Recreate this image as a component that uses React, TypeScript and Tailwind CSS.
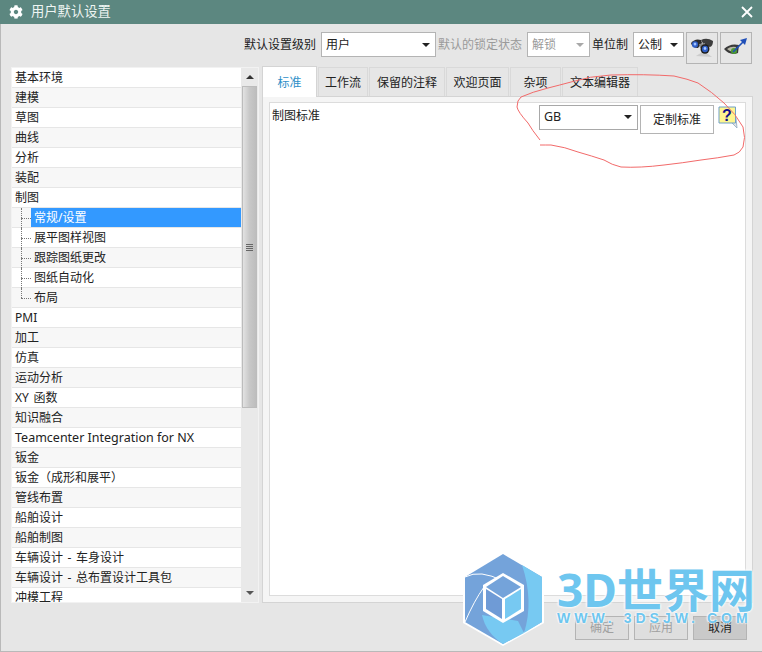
import { FaCog } from 'react-icons/fa';

const cjk = "font-['Noto_Sans','Noto_Sans_CJK_SC',sans-serif]";

const topRows = ['基本环境', '建模', '草图', '曲线', '分析', '装配', '制图'];
const childRows = ['常规/设置', '展平图样视图', '跟踪图纸更改', '图纸自动化', '布局'];
const bottomRows = [
  'PMI', '加工', '仿真', '运动分析', 'XY 函数', '知识融合', 'Teamcenter Integration for NX', '钣金',
  '钣金（成形和展平）', '管线布置', '船舶设计', '船舶制图', '车辆设计 - 车身设计', '车辆设计 - 总布置设计工具包', '冲模工程',
];
const tabs = [
  { label: '标准', w: 'w-[55px]' },
  { label: '工作流', w: 'w-[50px]' },
  { label: '保留的注释', w: 'w-[76px]' },
  { label: '欢迎页面', w: 'w-[63px]' },
  { label: '杂项', w: 'w-[51px]' },
  { label: '文本编辑器', w: 'w-[76px]' },
];

function Arrow({ muted }: { muted?: boolean }) {
  return (
    <span className={`w-0 h-0 border-x-[4px] border-x-transparent border-t-[4px] ${muted ? 'border-t-[#a8a8a8]' : 'border-t-[#222]'}`}></span>
  );
}

function Select({ value, width, muted }: { value: string; width: string; muted?: boolean }) {
  return (
    <div className={`${width} h-[25px] bg-white border border-[#b4b4b4] flex items-center justify-between pl-[4px] pr-[5px] text-[12px] ${muted ? 'text-[#9a9a9a]' : 'text-[#222]'}`}>
      <span>{value}</span>
      <Arrow muted={muted} />
    </div>
  );
}

function Row({ label, index, child, selected, last }: { label: string; index: number; child?: boolean; selected?: boolean; last?: boolean }) {
  const bg = index % 2 === 0 ? 'bg-white' : 'bg-[#f7f7f7]';
  const size = label.startsWith('Teamcenter') ? 'text-[12.5px] [word-spacing:0px]' : 'text-[12px] [word-spacing:1.5px]';
  return (
    <div className={`h-5 shrink-0 flex border-b border-[#e6e6e6] ${size} text-[#222] leading-[19px] whitespace-nowrap ${bg}`}>
      {child && (
        <span className="relative w-[19px] shrink-0">
          <span className={`absolute left-[9px] top-0 border-l border-dotted border-[#777] ${last ? 'h-[10px]' : 'h-5'}`}></span>
          <span className="absolute left-[9px] top-[10px] w-[10px] border-t border-dotted border-[#777]"></span>
        </span>
      )}
      <span className={selected ? 'flex-1 bg-[#3399ff] text-white pl-[3px]' : 'pl-[3px]'}>{label}</span>
    </div>
  );
}

function Tree() {
  return (
    <div className="w-[248px] h-[536px] shrink-0 bg-white border border-[#f2f2f2] flex">
      <div className="w-[229px] overflow-hidden flex flex-col">
        {topRows.map((r, i) => <Row key={r} label={r} index={i} />)}
        {childRows.map((r, i) => (
          <Row key={r} label={r} index={i + 7} child selected={i === 0} last={i === 4} />
        ))}
        {bottomRows.map((r, i) => <Row key={r} label={r} index={i + 12} />)}
      </div>
      <div className="flex-1 bg-[#e9e9e9] flex flex-col items-center">
        <div className="h-[18px] flex items-center">
          <span className="w-0 h-0 border-x-[4px] border-x-transparent border-b-[4px] border-b-[#333]"></span>
        </div>
        <div className="w-[15px] h-[322px] bg-gradient-to-r from-[#e2e2e2] via-[#c8c8c8] to-[#bdbdbd] border border-[#bcbcbc] flex flex-col items-center justify-center gap-px">
          <span className="w-[7px] h-px bg-[#666]"></span>
          <span className="w-[7px] h-px bg-[#666]"></span>
          <span className="w-[7px] h-px bg-[#666]"></span>
          <span className="w-[7px] h-px bg-[#666]"></span>
        </div>
        <div className="mt-auto h-[18px] flex items-center">
          <span className="w-0 h-0 border-x-[4px] border-x-transparent border-t-[4px] border-t-[#555]"></span>
        </div>
      </div>
    </div>
  );
}

function Binoculars() {
  return (
    <svg width="24" height="22" viewBox="0 0 24 22">
      <path d="M6 19 L22 20 L14 14 Z" fill="#bbb" opacity="0.6" />
      <path d="M1 6 Q5 1 11 3 L12 6 L8 11 Q2 11 1 6 Z" fill="#2a2a2a" />
      <path d="M11 3 Q17 0 23 4 Q23 9 20 10 L14 8 Z" fill="#3d3d3d" />
      <path d="M9 7 L15 6 L15 10 L10 11 Z" fill="#888" />
      <ellipse cx="5" cy="7.5" rx="3" ry="3.2" fill="#2f5fc8" />
      <ellipse cx="5" cy="7" rx="1.4" ry="1.5" fill="#9cc0ff" />
      <ellipse cx="15" cy="12" rx="4.5" ry="4.8" fill="#1f1f1f" />
      <ellipse cx="15" cy="12" rx="3" ry="3.2" fill="#2f5fc8" />
      <ellipse cx="15" cy="11.5" rx="1.3" ry="1.4" fill="#a8c8ff" />
    </svg>
  );
}

function EyeArrow() {
  return (
    <svg width="26" height="22" viewBox="0 0 26 22">
      <path d="M1 12 Q7 6 16 8 L15 16 Q7 19 1 12 Z" fill="#3a3a3a" />
      <path d="M4 12 Q8 9 13 10 L12 15 Q7 15 4 12 Z" fill="#b8b8a8" />
      <circle cx="11" cy="14" r="3" fill="#4c9a34" />
      <path d="M10 15 L20 5" stroke="#1f4fb8" strokeWidth="1.6" />
      <path d="M17 3 L24 1 L22 8 Z" fill="#1f4fb8" />
    </svg>
  );
}

function HelpIcon() {
  return (
    <svg width="20" height="23" viewBox="0 0 20 23" className="shrink-0">
      <path d="M13 16 L19 22 L18 12" fill="#e4e4e4" stroke="#8fa8c0" strokeWidth="0.8" />
      <path d="M1 1 H17.5 V17 H1 Z" fill="#fff68f" stroke="#6f9fc8" strokeWidth="1" />
      <text x="9" y="15" textAnchor="middle" fontFamily="'Liberation Sans', sans-serif" fontWeight="700" fontSize="16" fill="#12128c">?</text>
    </svg>
  );
}

function Watermark() {
  return (
    <div className="absolute left-[462px] top-[551px] flex items-start pointer-events-none">
      <svg width="84" height="96" viewBox="0 0 84 96" className="shrink-0">
        <polygon points="41,1 82,25 82,72 41,95 1,72 1,25" fill="#fff" />
        <polygon points="41,3 80,26 80,71 41,93 3,71 3,26" fill="#74a3da" />
        <path d="M60,14 L80,26 L80,71 L62,82 Q72,50 60,14 Z" fill="#77c9f2" />
        <path d="M20,64 Q24,82 41,93 L62,82 L56,70 Z" fill="#77c9f2" />
        <path d="M3,26 Q18,18 41,30" stroke="#fff" strokeWidth="1" fill="none" />
        <path d="M3,71 Q12,50 22,36" stroke="#fff" strokeWidth="1" fill="none" />
        <polygon points="41,22 62,34 62,60 41,72 21,60 21,34" fill="#fff" />
        <polygon points="41,25 59,36 41,47 24,36" fill="#74a3da" />
        <polygon points="24,38 40,48 40,68 24,58" fill="#6f9bd6" />
        <polygon points="43,48 59,38 59,58 43,68" fill="#77c9f2" />
      </svg>
      <div className={`ml-[11px] flex flex-col items-start ${cjk}`}>
        <span className="text-[46px] leading-[52px] mt-[12px] font-bold text-[#6ec6ef] whitespace-nowrap [text-shadow:0_0_3px_#fff,0_0_3px_#fff,0_0_2px_#fff]">3D世界网</span>
        <span className="-mt-[4px] text-[14px] leading-[15px] font-bold tracking-[4px] text-[#6ec6ef] whitespace-nowrap font-['Liberation_Sans',sans-serif] [text-shadow:0_0_2px_#fff,0_0_2px_#fff,0_0_2px_#fff]">WWW. 3DSJW. COM</span>
      </div>
    </div>
  );
}

export default function App() {
  return (
    <div className={`relative w-[762px] h-[652px] overflow-hidden flex flex-col bg-[#e6e6e6] ${cjk}`}>
      {/* title bar */}
      <div className="h-6 shrink-0 bg-[#5c8780] flex items-center pl-[9px] pr-[9px] text-white">
        <FaCog className="w-[14px] h-[14px]" />
        <span className="ml-[8px] text-[13.3px] text-[#eef5f3]">用户默认设置</span>
        <svg width="12" height="12" viewBox="0 0 12 12" className="ml-auto">
          <path d="M1 1 L11 11 M11 1 L1 11" stroke="#fff" strokeWidth="1.8" />
        </svg>
      </div>

      <div className="flex-1 flex flex-col border-l border-b border-[#b9b9b9]">
        {/* toolbar */}
        <div className="h-[43px] shrink-0 pt-2 pr-[10px] flex items-start justify-end text-[12px] text-[#222]">
          <span className="leading-[25px]">默认设置级别</span>
          <div className="ml-[5px]"><Select value="用户" width="w-[115px]" /></div>
          <span className="ml-[2px] leading-[25px] text-[#9a9a9a]">默认的锁定状态</span>
          <div className="ml-[5px]"><Select value="解锁" width="w-[63px]" muted /></div>
          <span className="ml-[2px] leading-[25px]">单位制</span>
          <div className="ml-[5px]"><Select value="公制" width="w-[51px]" /></div>
          <button className="ml-[2px] w-[32px] h-[32px] border border-[#b4b4b4] flex items-center justify-center"><Binoculars /></button>
          <button className="ml-[2px] w-[32px] h-[32px] border border-[#b4b4b4] flex items-center justify-center"><EyeArrow /></button>
        </div>

        {/* tree + tabs */}
        <div className="flex pl-[10px] gap-[3px]">
          <Tree />
          <div className="flex-1 flex flex-col pr-[9px] h-[536px]">
            <div className="h-[29px] shrink-0 flex gap-[1px] text-[12px] text-[#222]">
              {tabs.map((t, i) => (
                <div
                  key={t.label}
                  className={`${t.w} flex items-center justify-center pt-px ${i === 0
                    ? 'h-[31px] -mt-px z-10 bg-white text-[#2e8fc8] border border-b-0 border-[#d4d4d4]'
                    : 'h-[29px] bg-[#e6e6e6] border border-b-0 border-[#d9d9d9]'}`}
                >
                  {t.label}
                </div>
              ))}
            </div>
            <div className="flex-1 bg-[#f5f5f5] border border-[#d4d4d4] pt-[5px] pl-[6px] pr-[6px] pb-[6px] flex">
              <div className="flex-1 bg-white border border-[#dcdcdc] pl-[2px] pt-[2px] pr-[7px] flex items-start justify-between">
                <span className="mt-[3px] text-[12px] text-[#222] leading-[16px]">制图标准</span>
                <div className="flex items-start">
                  <div className="w-[99px] h-[25px] bg-white border border-[#a8a8a8] flex items-center justify-between pl-[4px] pr-[5px] pb-px text-[12.5px] text-[#222]">
                    <span>GB</span>
                    <Arrow />
                  </div>
                  <button className="ml-[2px] w-[74px] h-[29px] bg-white border border-[#b4b4b4] text-[12px] text-[#222]">定制标准</button>
                  <span className="ml-[4px] mt-[1px]"><HelpIcon /></span>
                </div>
              </div>
            </div>
          </div>
        </div>

        {/* footer buttons */}
        <div className="flex justify-end gap-[5px] pr-[15px] pt-[13px] text-[12px]">
          <button className="w-[54px] h-6 border border-[#b4b4b4] bg-[#dedede] text-[#a0a0a0]">确定</button>
          <button className="w-[54px] h-6 border border-[#b4b4b4] bg-[#dedede] text-[#a0a0a0]">应用</button>
          <button className="w-[54px] h-6 border border-[#b4b4b4] bg-[#c9c9c9] text-[#222]">取消</button>
        </div>
      </div>

      {/* red hand-drawn annotation */}
      <svg width="762" height="652" viewBox="0 0 762 652" className="absolute left-0 top-0 pointer-events-none">
        <path
          d="M540 140 Q532 130 528 123 Q518 112 517 107 Q517 100 521 97 Q532 92 548 88 Q560 85 571 82 Q590 76 611 75 Q645 74 674 76 Q688 79 698 83 Q712 92 724 103 Q736 114 743 127 Q746 138 743 147 Q740 153 734 155 Q718 158 701 160 Q682 163 664 165 Q640 168 621 167 Q612 165 604 160 Q592 156 578 152 Q565 147 551 145 Q545 145 540 145"
          fill="none"
          stroke="#f26a6a"
          strokeWidth="1"
        />
      </svg>

      <Watermark />
    </div>
  );
}
